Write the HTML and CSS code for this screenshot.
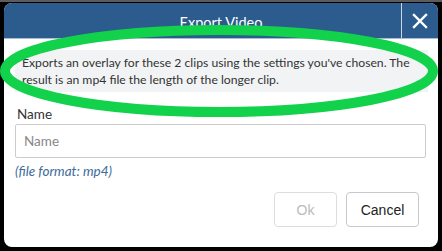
FILE: index.html
```html
<!DOCTYPE html>
<html>
<head>
<meta charset="utf-8">
<link rel="stylesheet" href="styles.css">
</head>
<body>
<div class="topstrip"></div>
<div class="dialog">
  <div class="header">
    <div class="title">Export Video</div>
    <button class="close" aria-label="Close">
      <svg width="16" height="16" viewBox="0 0 16 16"><path d="M2 2 L14 14 M14 2 L2 14" stroke="#fff" stroke-width="2.4" stroke-linecap="square"/></svg>
    </button>
  </div>
  <div class="body">
    <div class="desc">Exports an overlay for these 2 clips using the settings you've chosen. The result is an mp4 file the length of the longer clip.</div>
    <label class="label">Name</label>
    <input class="input" type="text" placeholder="Name">
    <div class="hint">(file format: mp4)</div>
    <div class="actions">
      <button class="btn ok">Ok</button>
      <button class="btn cancel">Cancel</button>
    </div>
  </div>
</div>
<svg class="annot" width="442" height="251" viewBox="0 0 442 251"><ellipse cx="219" cy="71" rx="214" ry="41" fill="none" stroke="#12d14b" stroke-width="10"/></svg>
</body>
</html>
```
FILE: styles.css
```css
html, body { margin: 0; padding: 0; }
body {
  background: #000;
  width: 442px;
  height: 251px;
  overflow: hidden;
  position: relative;
  font-family: Lato, "Open Sans", sans-serif;
}
.topstrip { height: 2px; background: #5c5c5c; margin-bottom: 1px; }
.dialog {
  margin-left: 4px;
  width: 434px;
  height: 244px;
  background: #fff;
  border-radius: 8px;
  overflow: hidden;
  display: flex;
  flex-direction: column;
}
.header {
  height: 35px;
  background: #2b5c8d;
  border-bottom: 1px solid #a8bdd3;
  position: relative;
  display: flex;
  align-items: center;
  justify-content: center;
}
.title { color: #fff; font-size: 14.5px; padding-top: 4px; }
.close {
  position: absolute;
  right: 0; top: 0; bottom: 0;
  width: 37px;
  background: transparent;
  border: 0;
  border-left: 1px solid #c9d6e3;
  padding: 0;
  display: flex;
  align-items: center;
  justify-content: center;
}
.body { padding: 11px 12px 0 11px; display: flex; flex-direction: column; }
.desc {
  background: #f2f3f5;
  color: #333;
  font-size: 12.2px;
  line-height: 17px;
  padding: 4px 3px 4px 7px;
  margin-right: -2px;
}
.label { font-size: 13.5px; font-weight: 400; color: #333; margin-top: 14px; line-height: 16px; padding-left: 2px; }
.input {
  margin-top: 2px;
  height: 34px;
  box-sizing: border-box;
  border: 1px solid #ccc;
  border-radius: 2px;
  padding: 0 8px;
  font-family: Lato, sans-serif;
  font-size: 13.5px;
  color: #333;
  outline: none;
}
.input::placeholder { color: #888; }
.hint { font-size: 13.5px; font-style: italic; color: #3d6b9b; margin-top: 5px; line-height: 17px; }
.actions { display: flex; justify-content: flex-end; gap: 9px; margin-top: 12px; padding-right: 7px; }
.btn {
  height: 35px;
  box-sizing: border-box;
  border: 1px solid #c8c8c8;
  border-radius: 4px;
  background: #fff;
  font-family: "Liberation Sans", Arial, sans-serif;
  font-size: 14px;
  color: #222;
  padding: 0;
}
.ok { color: #bbb; border-color: #ddd; width: 63px; }
.cancel { width: 73px; }
.annot { position: absolute; left: 0; top: 0; pointer-events: none; }
```
